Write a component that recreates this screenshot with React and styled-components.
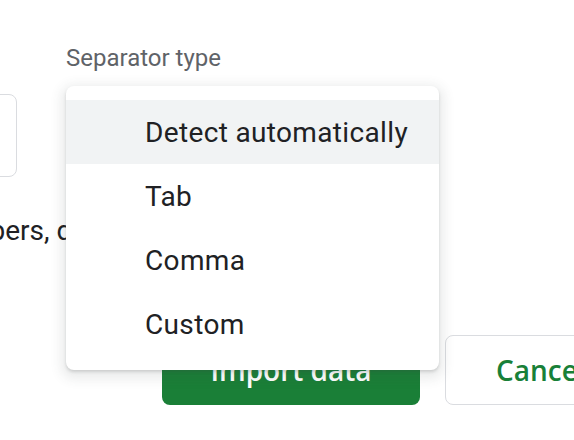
import styled, { createGlobalStyle } from "styled-components";

const GlobalStyle = createGlobalStyle`
  body {
    margin: 0;
    background: #ffffff;
    font-family: Roboto, "Noto Sans", Arial, sans-serif;
  }
`;

const SEPARATORS = ["Detect automatically", "Tab", "Comma", "Custom"];

export default function App() {
  return (
    <>
      <GlobalStyle />
      <Page>
        <FieldRow>
          <Field width="260px">
            <Label>Import location</Label>
            <SelectBox />
          </Field>
          <Field width="373px">
            <Label>Separator type</Label>
            <SelectBox />
          </Field>
        </FieldRow>
        <CheckRow>Convert text to numbers, dates, and formulas</CheckRow>
        <ButtonRow>
          <PrimaryButton>Import data</PrimaryButton>
          <SecondaryButton>Cancel</SecondaryButton>
        </ButtonRow>
        <Menu>
          {SEPARATORS.map((item, i) => (
            <MenuItem key={item} active={i === 0}>
              {item}
            </MenuItem>
          ))}
        </Menu>
      </Page>
    </>
  );
}

const Page = styled.div`
  position: relative;
  width: 574px;
  height: 440px;
  overflow: hidden;
  display: flex;
  flex-direction: column;
`;

const FieldRow = styled.div`
  display: flex;
  gap: 49px;
  margin-left: -243px;
  padding-top: 43px;
`;

const Field = styled.div`
  display: flex;
  flex-direction: column;
  gap: 21px;
  width: ${(props) => props.width};
  flex-shrink: 0;
`;

const Label = styled.div`
  font-size: 24px;
  line-height: 30px;
  color: #5f6368;
  white-space: nowrap;
`;

const SelectBox = styled.div`
  height: 83px;
  border: 1px solid #dadce0;
  border-radius: 8px;
  box-sizing: border-box;
`;

const CheckRow = styled.div`
  margin-top: 38px;
  margin-left: -256px;
  font-size: 28px;
  line-height: 32px;
  color: #202124;
  white-space: nowrap;
`;

const ButtonRow = styled.div`
  display: flex;
  gap: 25px;
  margin-top: 88px;
  padding-left: 162px;
`;

const PrimaryButton = styled.button`
  width: 258px;
  height: 70px;
  flex-shrink: 0;
  border: none;
  border-radius: 8px;
  background: #1a7f37;
  color: #ffffff;
  font-family: "Open Sans", Roboto, sans-serif;
  font-size: 28px;
  font-weight: 600;
`;

const SecondaryButton = styled.button`
  width: 200px;
  height: 70px;
  flex-shrink: 0;
  border: 1px solid #dadce0;
  border-radius: 8px;
  background: #ffffff;
  color: #188038;
  font-family: "Open Sans", Roboto, sans-serif;
  font-size: 28px;
  font-weight: 600;
  text-align: left;
  padding-left: 50px;
`;

const Menu = styled.div`
  position: absolute;
  left: 66px;
  top: 86px;
  width: 373px;
  padding: 14px 0 14px;
  background: #ffffff;
  border-radius: 8px;
  box-shadow: 0 2px 3px rgba(60, 64, 67, 0.18),
    0 4px 12px 5px rgba(60, 64, 67, 0.1);
`;

const MenuItem = styled.div`
  height: 64px;
  display: flex;
  align-items: center;
  padding-left: 79px;
  font-size: 28px;
  letter-spacing: 0.35px;
  color: #202124;
  background: ${(props) => (props.active ? "#f1f3f4" : "transparent")};
`;
